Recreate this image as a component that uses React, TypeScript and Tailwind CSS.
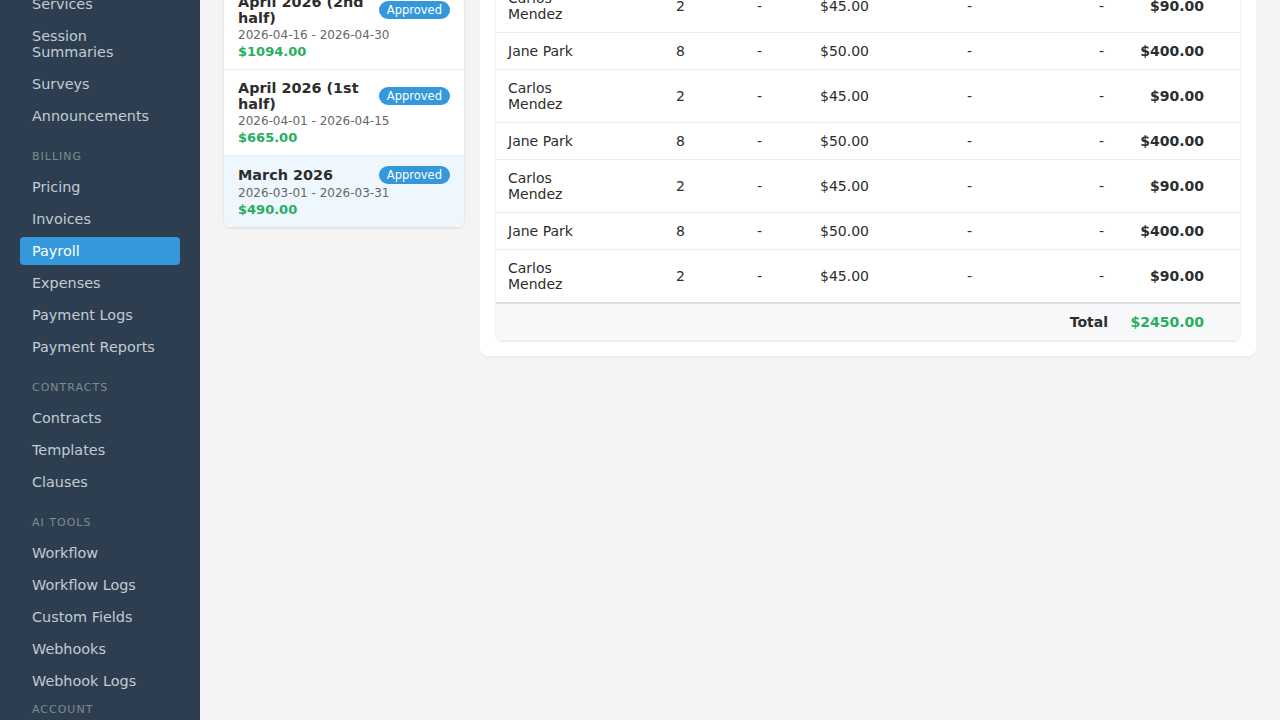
import React from "react";

type NavSection = { label?: string; labelClass?: string; items: string[] };

const nav: NavSection[] = [
  { items: ["Services", "Session Summaries", "Surveys", "Announcements"] },
  {
    label: "Billing",
    items: ["Pricing", "Invoices", "Payroll", "Expenses", "Payment Logs", "Payment Reports"],
  },
  { label: "Contracts", items: ["Contracts", "Templates", "Clauses"] },
  {
    label: "AI Tools",
    items: ["Workflow", "Workflow Logs", "Custom Fields", "Webhooks", "Webhook Logs"],
  },
  { label: "Account", labelClass: "mt-[8px]", items: [] },
];

const periods = [
  { title: "April 2026 (2nd half)", range: "2026-04-16 - 2026-04-30", total: "$1094.00" },
  { title: "April 2026 (1st half)", range: "2026-04-01 - 2026-04-15", total: "$665.00" },
  { title: "March 2026", range: "2026-03-01 - 2026-03-31", total: "$490.00", active: true },
];

const carlos = { name: "Carlos Mendez", qty: "2", rate: "$45.00", amount: "$90.00" };
const jane = { name: "Jane Park", qty: "8", rate: "$50.00", amount: "$400.00" };
const rows = [carlos, jane, carlos, jane, carlos, jane, carlos];

function Sidebar() {
  return (
    <aside className="w-[200px] shrink-0 bg-[#2c3e50] h-full overflow-hidden">
      <div className="px-5 mt-[-10px]">
        {nav.map((section, i) => (
          <div key={i}>
            {section.label && (
              <div
                className={`${section.labelClass ?? "mt-[20px]"} mb-[10px] px-3 text-[11px] leading-[13px] uppercase tracking-[1px] text-[#7f8c8d]`}
              >
                {section.label}
              </div>
            )}
            {section.items.map((item) => {
              const active = item === "Payroll";
              return (
                <div
                  key={item}
                  className={`mb-1 rounded px-3 py-[6px] text-[14.4px] leading-[16px] ${
                    active ? "bg-[#3498db] text-white" : "text-[#c3cbd3]"
                  }`}
                >
                  {item}
                </div>
              );
            })}
          </div>
        ))}
      </div>
    </aside>
  );
}

function PeriodList() {
  return (
    <div className="w-[240px] shrink-0 mt-[-16px] bg-white rounded-md shadow-[0_1px_3px_rgba(0,0,0,0.1)] overflow-hidden">
      {periods.map((p, i) => (
        <div
          key={i}
          className={`px-[14px] pt-[10px] pb-[9px] ${i < periods.length - 1 ? "border-b border-[#eceef0]" : ""} ${
            p.active ? "bg-[#eef6fe]" : ""
          }`}
        >
          <div className="flex items-center justify-between gap-2">
            <div className="font-bold text-[14.4px] leading-[16px] text-[#2d2d2d]">{p.title}</div>
            <span className="shrink-0 rounded-full bg-[#3498db] px-2 text-[11.5px] leading-[18px] text-white">
              Approved
            </span>
          </div>
          <div className="mt-[1px] text-[12px] leading-[16px] text-[#666]">{p.range}</div>
          <div className="mt-[1px] text-[13px] leading-[16px] font-bold text-[#27ae60]">{p.total}</div>
        </div>
      ))}
    </div>
  );
}

function PayrollTable() {
  return (
    <div className="flex-1 bg-white rounded-lg px-4 pb-4 mt-[-40px] pt-5 shadow-[0_1px_2px_rgba(0,0,0,0.05)]">
      <div className="rounded-md bg-white shadow-[0_1px_3px_rgba(0,0,0,0.12)] overflow-hidden">
        <table className="w-full table-fixed border-collapse text-[14px] leading-[16px] text-[#2d2d2d]">
          <colgroup>
            <col className="w-[168px]" />
            <col className="w-[81px]" />
            <col className="w-[63px]" />
            <col className="w-[147px]" />
            <col className="w-[132px]" />
            <col className="w-[33px]" />
            <col className="w-[96px]" />
            <col className="w-[24px]" />
          </colgroup>
          <tbody>
            {rows.map((r, i) => {
              const border = i < rows.length - 1 ? "border-b border-[#eceef0]" : "";
              return (
                <tr key={i} className={border}>
                  <td className="px-3 py-[10px]">
                    <div className="max-w-[90px]">{r.name}</div>
                  </td>
                  <td className="px-3 py-[10px]">{r.qty}</td>
                  <td className="px-3 py-[10px]">-</td>
                  <td className="px-3 py-[10px]">{r.rate}</td>
                  <td className="px-3 py-[10px]">-</td>
                  <td className="px-3 py-[10px]">-</td>
                  <td className="px-3 py-[10px] text-right font-bold">{r.amount}</td>
                  <td />
                </tr>
              );
            })}
          </tbody>
          <tfoot>
            <tr className="border-t-2 border-[#dddddd] bg-[#f7f8fa]">
              <td colSpan={6} className="px-3 py-[10px] text-right font-bold">
                Total
              </td>
              <td className="pl-1 pr-3 py-[10px] text-right font-bold text-[#27ae60]">$2450.00</td>
              <td />
            </tr>
          </tfoot>
        </table>
      </div>
    </div>
  );
}

export default function App() {
  return (
    <div
      className="h-[720px] w-[1280px] flex overflow-hidden bg-[#f4f4f4]"
      style={{ fontFamily: '"DejaVu Sans", Verdana, sans-serif' }}
    >
      <Sidebar />
      <main className="flex-1 overflow-hidden px-6">
        <div className="flex items-start gap-4">
          <PeriodList />
          <PayrollTable />
        </div>
      </main>
    </div>
  );
}
